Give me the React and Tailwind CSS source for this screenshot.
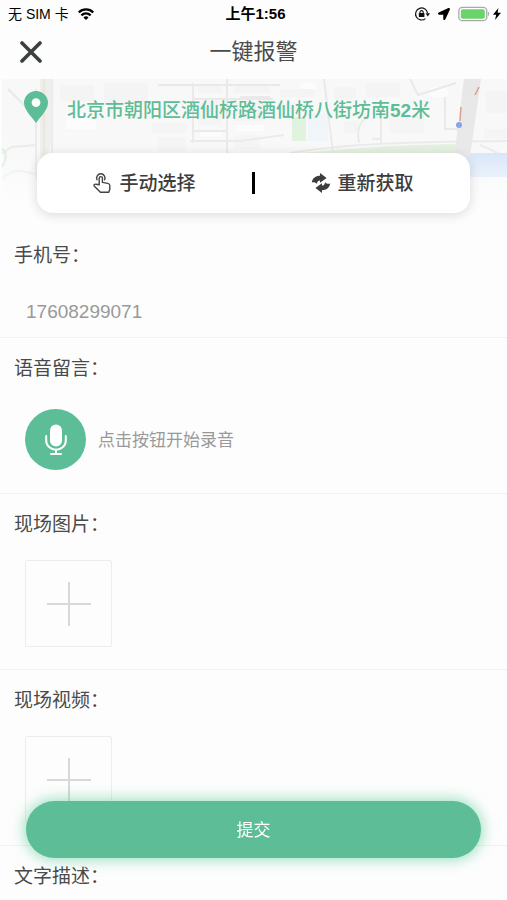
import React, { useState } from 'react';
import { FaLocationArrow } from 'react-icons/fa';

const GREEN = '#5dbd96';

const StatusBar = () => (
  <div className="flex h-7 items-center justify-between pl-2 pr-1 text-sm text-black">
    <div className="flex flex-1 items-center gap-2">
      <span>无 SIM 卡</span>
      <svg viewBox="0 0 18 13" className="h-3 w-[18px]" fill="none" stroke="#000" strokeWidth="2.4">
        <path d="M1.2 4.8a11 11 0 0 1 15.6 0" />
        <path d="M4 8a7 7 0 0 1 10 0" />
        <path d="M9 13 6.2 10.2a4 4 0 0 1 5.6 0z" fill="#000" stroke="none" />
      </svg>
    </div>
    <span className="text-[15px] font-semibold">上午1:56</span>
    <div className="flex flex-1 items-center justify-end">
      <svg viewBox="0 0 16 16" className="mr-2 h-4 w-4" fill="none" stroke="#111">
        <path d="M11.4 12.6A6 6 0 1 1 13.5 7" strokeWidth="1.2" />
        <path d="M11.6 7.2h4.4L13.8 10.4z" fill="#111" stroke="none" />
        <path d="M6 7.5V6.2a1.6 1.6 0 0 1 3.2 0v1.3" strokeWidth="1.1" />
        <rect x="4.8" y="7" width="5.6" height="4" rx="0.6" fill="#111" stroke="none" />
      </svg>
      <FaLocationArrow className="mr-2 h-3 w-3" />
      <svg viewBox="0 0 32 16" className="h-4 w-8">
        <rect x="0.8" y="1.3" width="28" height="13.4" rx="3.6" fill="#fff" stroke="#aaa" strokeWidth="1.3" />
        <rect x="2.8" y="3.2" width="24" height="9.6" rx="1.8" fill="#6ad46b" />
        <path d="M30 5.8c1.6.6 1.6 3.8 0 4.4z" fill="#aaa" />
      </svg>
      <svg viewBox="0 0 8 12" className="ml-[3px] mr-[2px] h-3 w-2" fill="#000">
        <path d="M5.4 0 0 6.8h3.2L2 12l6-7.2H4.6z" />
      </svg>
    </div>
  </div>
);

const MapBackground = () => (
  <svg
    viewBox="0 0 507 146"
    preserveAspectRatio="xMidYMin slice"
    className="absolute inset-0 h-full w-full"
    aria-hidden="true"
  >
    <defs>
      <linearGradient id="fade" x1="0" y1="0" x2="0" y2="1">
        <stop offset="0" stopColor="#fdfdfd" stopOpacity="0" />
        <stop offset="0.5" stopColor="#fdfdfd" stopOpacity="0.1" />
        <stop offset="0.85" stopColor="#fdfdfd" stopOpacity="1" />
      </linearGradient>
    </defs>
    <rect x="2" width="505" height="146" fill="#f8f8f8" />
    <g fill="#f4f4f4">
      <path d="M60 6h34v16H60zM104 4h44v22h-44zM152 44h34v10h-34zM158 58h28v14h-28zM198 6h24v8h-24zM234 6h36v8h-36zM198 22h24v24h-24zM234 24h30v18h-30zM234 56h26v14h-26zM280 10h34v8h-34zM278 24h24v8h-24zM334 8h22v12h-22zM366 4h34v14h-34zM344 42h14v12h-14zM390 36h34v18h-34zM486 12h21v22h-21zM484 50h23v10h-23z" />
    </g>
    <g fill="#fcfcfc">
      <path d="M200 52h22v6h-22zM236 46h28v6h-28zM300 4h16v6h-16zM430 8h18v10h-18zM66 34h30v16H66z" />
    </g>
    <path d="M292 38h14v24h-14z" fill="#dff2dc" />
    <path d="M308 34h20v28h-20z" fill="#eff5f9" />
    <path d="M284 76c50-6 110-10 174-11v15H284z" fill="#e3f0dd" />
    <path d="M468 74h39v24h-49z" fill="#d5e3f9" />
    <g fill="none" stroke="#e9e9e9" strokeWidth="2">
      <path d="M8 10l24 24M2 74l10-6 24-2M2 100c10-10 18-10 34-4M36 10v90M52 0v74" />
      <path d="M158 6h122M193 4v60M227 0v74M193 20h80M193 52h34M190 62h50l44-6M240 18h30" />
      <path d="M324 0l9 74M290 74c60-10 120-11 217-12M359 64c-3-16 2-22 10-28M381 36v28M372 60h9M410 0l8 16 38-12M445 18v32h14M456 50l10 6M480 66l18 8" />
    </g>
    <path d="M40 0h12v60l-12 44z" fill="#eeeeee" />
    <path d="M44 0v80" stroke="#ebe8da" strokeWidth="3" />
    <path d="M464 0h17l-11 78h-16z" fill="#e7e7e7" />
    <path d="M2 70c6 4 4 12 0 18" stroke="#d5eed5" strokeWidth="2" fill="none" />
    <path d="M461 28l-1 14M479 8l-4 8" stroke="#dd9c8c" strokeWidth="1.5" />
    <circle cx="459" cy="46" r="3" fill="#7d9fe8" />
    <rect width="507" height="146" fill="url(#fade)" />
  </svg>
);

const PinIcon = () => (
  <svg viewBox="0 0 24 32" className="h-8 w-6 shrink-0" fill={GREEN}>
    <path d="M12 0a12 12 0 0 1 12 12c0 7-8 14-12 20C8 26 0 19 0 12A12 12 0 0 1 12 0z" />
    <circle cx="12" cy="11.6" r="4.4" fill="#fdfdfd" />
  </svg>
);

const TapIcon = () => (
  <svg
    viewBox="0 0 18 20"
    className="h-5 w-[18px]"
    fill="none"
    stroke="#444"
    strokeWidth="1.4"
    strokeLinejoin="round"
    strokeLinecap="round"
  >
    <path d="M4 6.8a4.2 4.2 0 1 1 7.6 0" />
    <path d="M6.2 11.8V5.2a1.6 1.6 0 0 1 3.2 0v4.2l5.4 1c1.3.2 2 .9 2 2.2v3.6l-1 3H7.4L1.4 13.2c-1-1.2.4-2.500 1.700-1.900z" />
  </svg>
);

const RefreshIcon = () => (
  <svg viewBox="0 0 20 20" className="h-5 w-5" fill="#3d3d3d">
    <path id="arrow" d="M.8 9.400C1.600 5 4.600 2.800 9 2.800V0l6.600 5L9 9.800V7.400c-1.800 0-2.800 1-3 3.400C4.600 9.400 2.800 8.800.8 9.400z" />
    <use href="#arrow" transform="rotate(180 10 10)" />
  </svg>
);

const MicIcon = () => (
  <svg viewBox="0 0 22 32" className="h-8 w-[22px]" fill="none" stroke="#fff" strokeWidth="2" strokeLinecap="round">
    <rect x="5" y="0.5" width="12" height="22" rx="6" fill="#fff" stroke="none" />
    <path d="M1.2 12v4.5a9.8 9.3 0 0 0 19.6 0V12M11 26v4M6 30h10" />
  </svg>
);

const Section = ({ label, htmlFor, className = '', children }) => (
  <section className={`border-b border-[#f1f1f1] px-[14px] pt-[17px] last:border-b-0 ${className}`}>
    {htmlFor ? (
      <label htmlFor={htmlFor} className="block text-[19px] leading-7 text-[#4a4a4a]">{label}</label>
    ) : (
      <h2 className="text-[19px] leading-7 text-[#4a4a4a]">{label}</h2>
    )}
    {children}
  </section>
);

const AddButton = ({ label }) => (
  <button
    type="button"
    aria-label={label}
    className="ml-[11px] mt-[21px] flex h-[87px] w-[87px] items-center justify-center rounded-xs border border-[#ededed]"
  >
    <svg viewBox="0 0 44 44" className="h-11 w-11" stroke="#d8d8d8" strokeWidth="2">
      <path d="M22 0v44M0 22h44" />
    </svg>
  </button>
);

export default function App() {
  const [phone, setPhone] = useState('17608299071');

  return (
    <div
      lang="zh-CN"
      className="min-h-screen bg-[#fdfdfd] font-['Liberation_Sans','Noto_Sans_CJK_SC',sans-serif]"
    >
      <StatusBar />

      <header className="grid h-[51px] grid-cols-[1fr_auto_1fr] items-center px-5 pb-1">
        <button type="button" aria-label="关闭" className="w-fit">
          <svg viewBox="0 0 22 22" className="h-[22px] w-[22px]" stroke="#3c3f41" strokeWidth="3.6" strokeLinecap="round">
            <path d="M2 2l18 18M20 2L2 20" />
          </svg>
        </button>
        <h1 className="text-[22px] leading-8 text-[#4a4a4a]">一键报警</h1>
      </header>

      <div className="relative">
        <MapBackground />
        <div className="relative py-3">
          <div className="flex items-start gap-[19px] pl-6 text-[#5dbd96]">
            <PinIcon />
            <p className="whitespace-nowrap pt-1 text-[19px] font-medium leading-8">
              北京市朝阳区酒仙桥路酒仙桥八街坊南<span className="font-semibold">52</span>米
            </p>
          </div>
          <div className="mx-[37px] mt-[26px] flex h-[60px] items-center rounded-2xl bg-white text-[19px] font-medium text-[#3d3d3d] shadow-[0_2px_12px_rgba(0,0,0,0.14)]">
            <button type="button" className="flex flex-1 items-center justify-center gap-2">
              <TapIcon />
              <span className="pt-[3px]">手动选择</span>
            </button>
            <span className="h-[22px] w-[3px] bg-black" />
            <button type="button" className="flex flex-1 items-center justify-center gap-[6px]">
              <RefreshIcon />
              <span className="pt-[3px]">重新获取</span>
            </button>
          </div>
        </div>
      </div>

      <main>
        <Section label="手机号：" htmlFor="phone" className="pb-[11px]">
          <input
            id="phone"
            type="tel"
            value={phone}
            onChange={(e) => setPhone(e.target.value)}
            className="mt-7 block h-7 w-full bg-transparent pl-3 text-[19px] text-[#999] outline-none"
          />
        </Section>

        <Section label="语音留言：" className="pb-[23px]">
          <div className="ml-[11px] mt-[26px] flex items-center gap-3">
            <button
              type="button"
              aria-label="录音"
              className="flex h-[61px] w-[61px] items-center justify-center rounded-full bg-[#5dbd96]"
            >
              <MicIcon />
            </button>
            <span className="pt-[2px] text-[17px] text-[#999]">点击按钮开始录音</span>
          </div>
        </Section>

        <Section label="现场图片：" className="pb-[22px]">
          <AddButton label="添加图片" />
        </Section>

        <Section label="现场视频：" className="pb-[22px]">
          <AddButton label="添加视频" />
        </Section>

        <Section label="文字描述：" />
      </main>

      <button
        type="submit"
        className="fixed inset-x-[26px] bottom-[42px] h-[57px] rounded-full bg-[#5dbd96] pt-[2px] text-[17px] text-white shadow-[0_0_14px_2px_rgba(93,205,155,0.6)]"
      >
        提交
      </button>
    </div>
  );
}
